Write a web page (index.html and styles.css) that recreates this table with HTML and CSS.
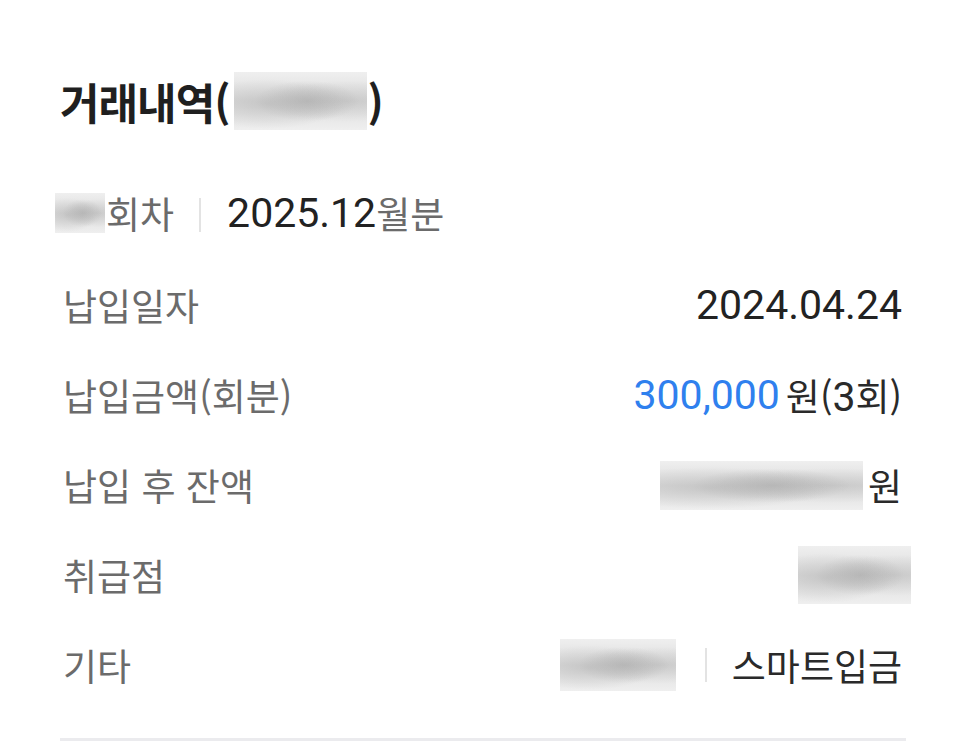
FILE: index.html
```html
<!DOCTYPE html>
<html lang="ko">
<head>
<meta charset="utf-8">
<link rel="stylesheet" href="styles.css">
</head>
<body>
<div class="page">
  <h1 class="title">거래내역(<span class="blur blur-title"></span>)</h1>
  <div class="round">
    <span class="blur blur-round"></span><span class="gray">회차</span>
    <span class="sep sep-round"></span>
    <span class="num dark">2025.12</span><span class="gray">월분</span>
  </div>
  <div class="rows">
    <div class="row">
      <span class="label">납입일자</span>
      <span class="value"><span class="num">2024.04.24</span></span>
    </div>
    <div class="row">
      <span class="label">납입금액(회분)</span>
      <span class="value"><span class="num blue">300,000</span><span class="won">원(<span class="num">3</span>회)</span></span>
    </div>
    <div class="row">
      <span class="label">납입 후 잔액</span>
      <span class="value"><span class="blur blur-balance"></span><span class="won">원</span></span>
    </div>
    <div class="row">
      <span class="label">취급점</span>
      <span class="value"><span class="blur blur-branch"></span></span>
    </div>
    <div class="row">
      <span class="label">기타</span>
      <span class="value"><span class="blur blur-etc"></span><span class="sep sep-etc"></span><span class="won">스마트입금</span></span>
    </div>
  </div>
  <div class="divider"></div>
</div>
</body>
</html>
```
FILE: styles.css
```css
html, body {
  margin: 0;
  padding: 0;
  background: #ffffff;
}

body {
  font-family: "Noto Sans CJK KR", "Noto Sans", sans-serif;
  color: #222222;
}

.page {
  padding: 72px 60px 0 60px;
}

.title {
  margin: 0;
  font-size: 43px;
  line-height: 58px;
  font-weight: 700;
  color: #1f1f1f;
  letter-spacing: -1px;
  display: flex;
  align-items: center;
}

.blur {
  display: inline-block;
  background:
    radial-gradient(ellipse at 25% 55%, rgba(175,175,175,0.5), rgba(175,175,175,0) 55%),
    radial-gradient(ellipse at 55% 50%, rgba(165,165,165,0.55), rgba(165,165,165,0) 50%),
    radial-gradient(ellipse at 85% 50%, rgba(180,180,180,0.45), rgba(180,180,180,0) 50%),
    linear-gradient(180deg, #efefef, #dcdcdc 50%, #efefef);
}

.blur-title {
  width: 133px;
  height: 58px;
  margin: 0 1px 0 4px;
}

.round {
  margin-top: 53px;
  height: 60px;
  display: flex;
  align-items: center;
  font-size: 37px;
}

.blur-round {
  width: 50px;
  height: 40px;
  margin-left: -5px;
  margin-right: 1px;
}

.gray {
  color: #6b6b6b;
}

.dark {
  color: #222222;
}

.sep {
  display: inline-block;
  width: 2px;
  background: #e3e3e3;
}

.sep-round {
  height: 34px;
  margin: 4px 26px 0 25px;
}

.num {
  font-family: Roboto, "Noto Sans", sans-serif;
  font-size: 41px;
}

.rows {
  margin-top: 17px;
  padding-right: 4px;
}

.row {
  height: 90px;
  display: flex;
  align-items: center;
  justify-content: space-between;
}

.label {
  font-size: 37px;
  color: #6b6b6b;
  padding-left: 3px;
}

.value {
  display: flex;
  align-items: center;
  color: #222222;
  font-size: 37px;
}

.blue {
  color: #2f80ee;
  margin-right: 6px;
}

.won {
  color: #2a2a2a;
}

.blur-balance {
  width: 203px;
  height: 49px;
  margin-right: 5px;
}

.blur-branch {
  width: 113px;
  height: 58px;
  margin-right: -9px;
}

.blur-etc {
  width: 116px;
  height: 52px;
  margin-right: 29px;
}

.sep-etc {
  height: 34px;
  margin-right: 25px;
}

.divider {
  margin-top: 28px;
  height: 3px;
  background: #ebebee;
}
```
